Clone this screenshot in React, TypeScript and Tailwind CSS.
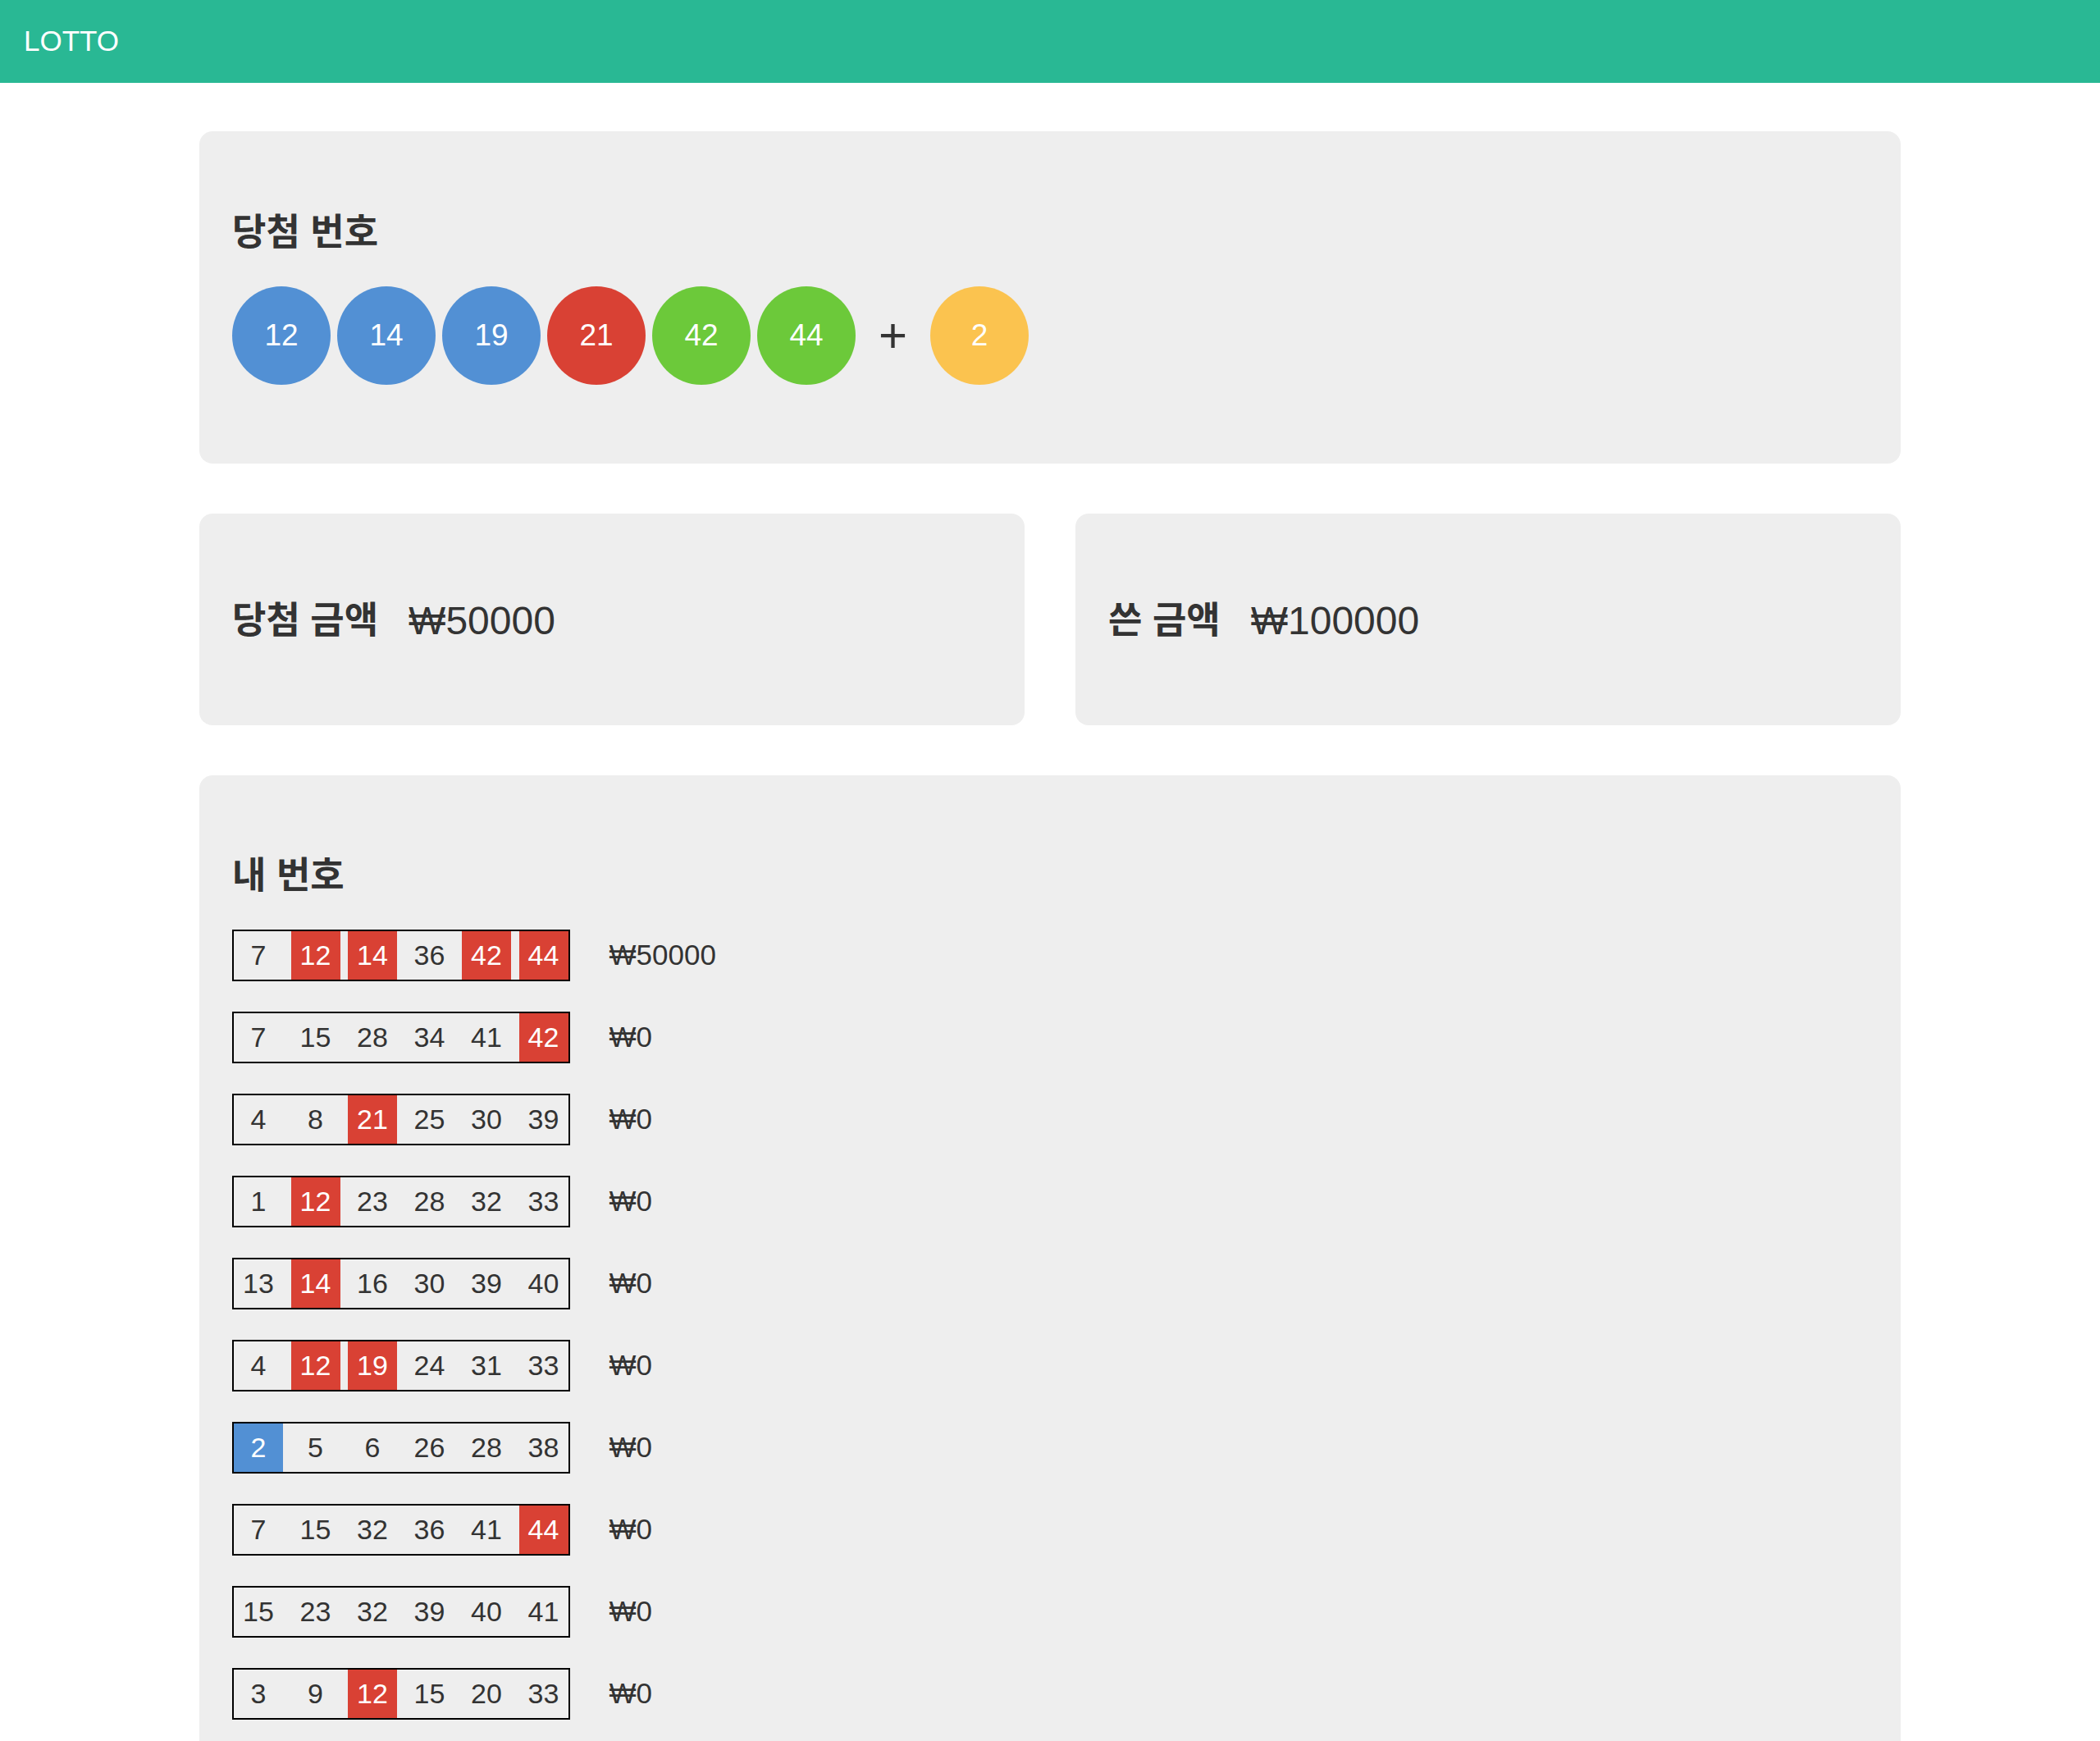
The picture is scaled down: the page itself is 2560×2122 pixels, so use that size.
import React from "react";

const WINNING = [12, 14, 19, 21, 42, 44];
const BONUS = 2;

const MY_NUMBERS: { nums: number[]; prize: number }[] = [
  { nums: [7, 12, 14, 36, 42, 44], prize: 50000 },
  { nums: [7, 15, 28, 34, 41, 42], prize: 0 },
  { nums: [4, 8, 21, 25, 30, 39], prize: 0 },
  { nums: [1, 12, 23, 28, 32, 33], prize: 0 },
  { nums: [13, 14, 16, 30, 39, 40], prize: 0 },
  { nums: [4, 12, 19, 24, 31, 33], prize: 0 },
  { nums: [2, 5, 6, 26, 28, 38], prize: 0 },
  { nums: [7, 15, 32, 36, 41, 44], prize: 0 },
  { nums: [15, 23, 32, 39, 40, 41], prize: 0 },
  { nums: [3, 9, 12, 15, 20, 33], prize: 0 },
];

const FONT = "font-['Liberation_Sans','Noto_Sans_CJK_KR',sans-serif]";

function ballColor(n: number) {
  if (n <= 10) return "bg-[#fbc34f]";
  if (n <= 20) return "bg-[#5290d4]";
  if (n <= 30) return "bg-[#d94134]";
  if (n <= 40) return "bg-[#aaaaaa]";
  return "bg-[#6cc93a]";
}

function Ball({ n }: { n: number }) {
  return (
    <div
      className={`w-[120px] h-[120px] rounded-full flex items-center justify-center text-white text-[37px] ${ballColor(n)}`}
    >
      {n}
    </div>
  );
}

function Card({ children, className = "" }: { children: React.ReactNode; className?: string }) {
  return <div className={`bg-[#eeeeee] rounded-[16px] px-10 ${className}`}>{children}</div>;
}

function Title({ children }: { children: React.ReactNode }) {
  return <h3 className="text-[45px] leading-[50px] font-bold text-[#333]">{children}</h3>;
}

function Cell({ n }: { n: number }) {
  let cls = "text-[#333]";
  if (WINNING.includes(n)) cls = "bg-[#d94134] text-white";
  else if (n === BONUS) cls = "bg-[#5290d4] text-white";
  return (
    <div className={`w-[60px] h-[59px] flex items-center justify-center text-[34px] ${cls}`}>{n}</div>
  );
}

export default function App() {
  const won = MY_NUMBERS.reduce((s, r) => s + r.prize, 0);

  return (
    <div className={`h-screen overflow-hidden bg-white ${FONT}`}>
      <header className="h-[101px] bg-[#29b894] flex items-center pl-[29px]">
        <span className="text-white text-[35px]">LOTTO</span>
      </header>

      <main className="w-[2074px] mx-auto mt-[59px] flex flex-col gap-[61px]">
        <Card className="pt-[99px] pb-24">
          <Title>당첨 번호</Title>
          <div className="mt-[40px] flex items-center gap-2">
            {WINNING.map((n) => (
              <Ball key={n} n={n} />
            ))}
            <span className="mx-[20px] text-[60px] leading-none text-[#333]">+</span>
            <Ball n={BONUS} />
          </div>
        </Card>

        <div className="flex gap-[62px]">
          <Card className="flex-1 h-[258px] flex items-center pt-[4px]">
            <Title>당첨 금액</Title>
            <span className="ml-[37px] text-[48px] text-[#333]">₩{won}</span>
          </Card>
          <Card className="flex-1 h-[258px] flex items-center pt-[4px]">
            <Title>쓴 금액</Title>
            <span className="ml-[37px] text-[48px] text-[#333]">₩100000</span>
          </Card>
        </div>

        <Card className="pt-[98px] pb-24">
          <Title>내 번호</Title>
          <div className="mt-[40px] flex flex-col gap-[37px]">
            {MY_NUMBERS.map((row, i) => (
              <div key={i} className="flex items-center">
                <div className="flex gap-[9.5px] border-2 border-black">
                  {row.nums.map((n) => (
                    <Cell key={n} n={n} />
                  ))}
                </div>
                <span className="ml-12 text-[35px] text-[#333]">₩{row.prize}</span>
              </div>
            ))}
          </div>
        </Card>
      </main>
    </div>
  );
}
